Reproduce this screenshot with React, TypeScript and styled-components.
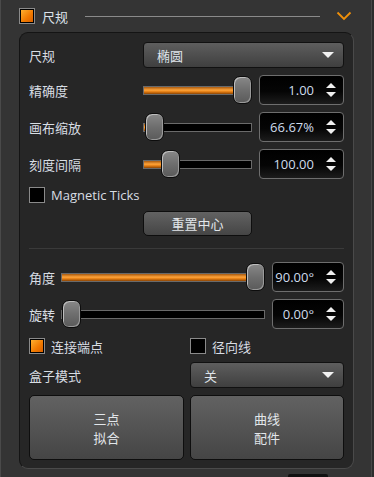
import React from "react";
import styled, { createGlobalStyle } from "styled-components";

const Global = createGlobalStyle`
  html, body { margin: 0; padding: 0; background: #333333; }
  body { width: 374px; height: 477px; overflow: hidden; }
  * { box-sizing: border-box; }
`;

const CJK = `"Noto Sans CJK SC", "Noto Sans", sans-serif`;
const LAT = `"Open Sans", "Noto Sans CJK SC", sans-serif`;

const Frame = styled.div`
  width: 374px;
  height: 477px;
  overflow: hidden;
  background: #343434;
  border-left: 1px solid #4a4a4a;
  border-right: 2px solid #2c2c2c;
  box-shadow: inset -1px 0 0 #474747;
  display: flex;
  flex-direction: column;
  font-family: ${CJK};
  color: #dadada;
`;

const Header = styled.div`
  height: 32px;
  display: flex;
  align-items: center;
  padding: 0 20px 0 18px;
  gap: 7px;
  flex-shrink: 0;
`;

const HeaderTitle = styled.span`
  font-size: 13px;
  color: #dde3ea;
  line-height: 1;
  margin-right: 10px;
`;

const HeaderLine = styled.div`
  flex: 1;
  height: 1px;
  background: #8a8a8a;
  margin-right: 9px;
`;

const Panel = styled.div`
  margin: 0 18px 0 18px;
  height: 437px;
  background: #262626;
  border: 1px solid #141414;
  border-right-color: #4a4a4a;
  border-bottom-color: #4a4a4a;
  border-radius: 9px;
  padding: 9px 9px 9px 9px;
  display: flex;
  flex-direction: column;
  flex-shrink: 0;
`;

const Row = styled.div<{ $h?: number; $mt?: number }>`
  display: flex;
  align-items: center;
  height: ${(p) => p.$h ?? 30}px;
  margin-top: ${(p) => p.$mt ?? 0}px;
  flex-shrink: 0;
`;

const Label = styled.div<{ $w: number }>`
  width: ${(p) => p.$w}px;
  flex-shrink: 0;
  font-size: 13px;
  color: #d8dde3;
  white-space: nowrap;
`;

const Dropdown = styled.div<{ $w: number }>`
  width: ${(p) => p.$w}px;
  height: 26px;
  border: 1px solid #111;
  border-radius: 4px;
  background: linear-gradient(#5e5e5e, #3f3f3f);
  display: flex;
  align-items: center;
  justify-content: space-between;
  padding: 0 9px 0 13px;
  font-size: 13px;
  color: #dfe4ea;
`;

const DownTri = styled.span`
  width: 0;
  height: 0;
  border-left: 6px solid transparent;
  border-right: 6px solid transparent;
  border-top: 6px solid #f2f2f2;
`;

const SliderBox = styled.div<{ $w: number }>`
  position: relative;
  width: ${(p) => p.$w}px;
  height: 30px;
  flex-shrink: 0;
  display: flex;
  align-items: center;
`;

const Track = styled.div`
  width: 100%;
  height: 9px;
  background: #000;
  border: 1px solid #6a6a6a;
  position: relative;
`;

const Fill = styled.div`
  position: absolute;
  left: 0;
  top: 0;
  bottom: 0;
  background: linear-gradient(#a85a10, #ffa43a 45%, #e07a10 70%, #8a4506);
`;

const Thumb = styled.div`
  position: absolute;
  top: 1px;
  width: 19px;
  height: 28px;
  border-radius: 7px;
  border: 1px solid #0c0c0c;
  background: linear-gradient(#888 0%, #6e6e6e 50%, #5a5a5a 100%);
  box-shadow: inset 1px 1px 0 #bdbdbd, inset -1px -1px 0 #9a9a9a;
`;

const Spin = styled.div<{ $w: number }>`
  width: ${(p) => p.$w}px;
  height: 30px;
  flex-shrink: 0;
  border: 1px solid #6e6e6e;
  border-radius: 4px;
  background: linear-gradient(#000 0%, #050505 55%, #1c1c1c 100%);
  display: flex;
  align-items: center;
  justify-content: flex-end;
  padding-right: 4px;
  font-family: ${LAT};
  font-size: 13px;
  color: #cfdcec;
`;

const SpinText = styled.span`
  margin-right: 11px;
`;

const Arrows = styled.div`
  width: 11px;
  display: flex;
  flex-direction: column;
  align-items: center;
  gap: 4px;
  margin-right: 3px;
`;

const Up = styled.span`
  width: 0;
  height: 0;
  border-left: 5px solid transparent;
  border-right: 5px solid transparent;
  border-bottom: 5px solid #f0f0f0;
`;

const Down = styled.span`
  width: 0;
  height: 0;
  border-left: 5px solid transparent;
  border-right: 5px solid transparent;
  border-top: 5px solid #f0f0f0;
`;

const Check = styled.div<{ $on?: boolean }>`
  width: 16px;
  height: 16px;
  flex-shrink: 0;
  border: 1px solid #8a8a8a;
  background: #000;
  padding: 1px;
  display: flex;
  &::after {
    content: "";
    flex: 1;
    display: ${(p) => (p.$on ? "block" : "none")};
    background: linear-gradient(135deg, #ffb030, #f07800 60%, #d86000);
  }
`;

const CheckLabel = styled.span<{ $latin?: boolean }>`
  margin-left: 6px;
  font-size: 13px;
  font-family: ${(p) => (p.$latin ? LAT : CJK)};
  color: #d8dde3;
`;

const CheckGroup = styled.div<{ $w?: number }>`
  display: flex;
  align-items: center;
  width: ${(p) => (p.$w ? `${p.$w}px` : "auto")};
`;

const Button = styled.div<{ $w?: number; $h: number }>`
  width: ${(p) => (p.$w ? `${p.$w}px` : "auto")};
  height: ${(p) => p.$h}px;
  border: 1px solid #0e0e0e;
  border-radius: 5px;
  background: linear-gradient(#626262, #454545);
  display: flex;
  align-items: center;
  justify-content: center;
  text-align: center;
  font-size: 13px;
  line-height: 19px;
  color: #e2e6ea;
`;

const Separator = styled.div`
  height: 1px;
  background: #3a3a3a;
  margin-top: 12px;
  flex-shrink: 0;
`;

const BigButtons = styled.div`
  display: grid;
  grid-template-columns: 155px 154px;
  gap: 6px;
  margin-top: 7px;
`;

const FooterRow = styled.div`
  display: flex;
  justify-content: flex-end;
  padding-right: 44px;
  margin-top: 5px;
`;

const FooterStub = styled.div`
  width: 40px;
  height: 6px;
  background: #111;
  border-radius: 2px;
`;

const Chevron = () => (
  <svg width="16" height="10" viewBox="0 0 16 10">
    <path d="M1.5 1.5 L8 8 L14.5 1.5" fill="none" stroke="#f0900a" strokeWidth="1.8" />
  </svg>
);

function Slider({ w, frac, thumbMin = 0 }: { w: number; frac: number; thumbMin?: number }) {
  const tw = 19;
  const left = thumbMin + frac * (w - tw - thumbMin);
  return (
    <SliderBox $w={w}>
      <Track>
        <Fill style={{ width: Math.max(0, left + tw / 2 - 1) }} />
      </Track>
      <Thumb style={{ left }} />
    </SliderBox>
  );
}

function SpinBox({ w, value }: { w: number; value: string }) {
  return (
    <Spin $w={w}>
      <SpinText>{value}</SpinText>
      <Arrows>
        <Up />
        <Down />
      </Arrows>
    </Spin>
  );
}

export default function App() {
  return (
    <>
      <Global />
      <Frame>
        <Header>
          <Check $on />
          <HeaderTitle>尺规</HeaderTitle>
          <HeaderLine />
          <Chevron />
        </Header>
        <Panel>
          <Row $h={26}>
            <Label $w={114}>尺规</Label>
            <Dropdown $w={201}>
              <span>椭圆</span>
              <DownTri />
            </Dropdown>
          </Row>
          <Row $mt={7}>
            <Label $w={114}>精确度</Label>
            <Slider w={109} frac={1} />
            <div style={{ width: 7 }} />
            <SpinBox w={85} value="1.00" />
          </Row>
          <Row $mt={7}>
            <Label $w={114}>画布缩放</Label>
            <Slider w={109} frac={0.02} />
            <div style={{ width: 7 }} />
            <SpinBox w={85} value="66.67%" />
          </Row>
          <Row $mt={7}>
            <Label $w={114}>刻度间隔</Label>
            <Slider w={109} frac={0.2} />
            <div style={{ width: 7 }} />
            <SpinBox w={85} value="100.00" />
          </Row>
          <Row $h={16} $mt={8}>
            <CheckGroup>
              <Check />
              <CheckLabel $latin>Magnetic Ticks</CheckLabel>
            </CheckGroup>
          </Row>
          <Row $h={25} $mt={8}>
            <Label $w={114} />
            <Button $w={109} $h={25}>重置中心</Button>
          </Row>
          <Separator />
          <Row $mt={13}>
            <Label $w={32}>角度</Label>
            <Slider w={204} frac={1} />
            <div style={{ width: 7 }} />
            <SpinBox w={72} value="90.00°" />
          </Row>
          <Row $mt={7}>
            <Label $w={32}>旋转</Label>
            <Slider w={204} frac={0} thumbMin={1} />
            <div style={{ width: 7 }} />
            <SpinBox w={72} value="0.00°" />
          </Row>
          <Row $h={16} $mt={9}>
            <CheckGroup $w={161}>
              <Check $on />
              <CheckLabel>连接端点</CheckLabel>
            </CheckGroup>
            <CheckGroup>
              <Check />
              <CheckLabel>径向线</CheckLabel>
            </CheckGroup>
          </Row>
          <Row $h={26} $mt={8}>
            <Label $w={161}>盒子模式</Label>
            <Dropdown $w={154}>
              <span>关</span>
              <DownTri />
            </Dropdown>
          </Row>
          <BigButtons>
            <Button $h={65}>
              三点
              <br />
              拟合
            </Button>
            <Button $h={65}>
              曲线
              <br />
              配件
            </Button>
          </BigButtons>
        </Panel>
        <FooterRow>
          <FooterStub />
        </FooterRow>
      </Frame>
    </>
  );
}
